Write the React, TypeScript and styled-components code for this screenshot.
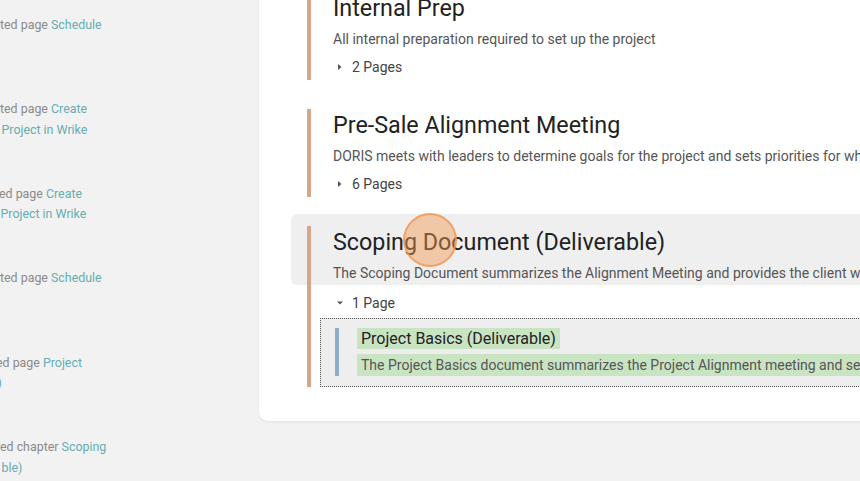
import styled, { createGlobalStyle } from 'styled-components';

const GlobalStyle = createGlobalStyle`
  html, body {
    margin: 0;
    padding: 0;
    background: #f2f2f2;
    font-family: Roboto, 'Noto Sans', sans-serif;
    overflow: hidden;
  }
`;

type Activity = {
  lead: string;
  link: string;
  more?: string;
  shift?: number;
};

const activities: Activity[] = [
  { lead: 'ted page ', link: 'Schedule' },
  { lead: 'ted page ', link: 'Create', more: 'Project in Wrike' },
  { lead: 'ed page ', link: 'Create', more: 'Project in Wrike', shift: -1 },
  { lead: 'ted page ', link: 'Schedule' },
  { lead: 'ed page ', link: 'Project', more: ')', shift: -4 },
  { lead: 'ed chapter ', link: 'Scoping', more: 'ble)' },
];

function Arrow({ open }: { open?: boolean }) {
  return (
    <ArrowIcon width="8" height="8" viewBox="0 0 8 8">
      {open ? <polygon points="1,2.5 7,2.5 4,5.5" /> : <polygon points="2,1 5.5,4 2,7" />}
    </ArrowIcon>
  );
}

function App() {
  return (
    <Page>
      <GlobalStyle />
      <Sidebar>
        {activities.map((a, i) => (
          <ActivityItem key={i} $shift={a.shift ?? 0}>
            <span>{a.lead}</span>
            <ActivityLink>{a.link}</ActivityLink>
            {a.more && (
              <ActivityLine>
                <ActivityLink>{a.more}</ActivityLink>
              </ActivityLine>
            )}
          </ActivityItem>
        ))}
      </Sidebar>

      <Card>
        <Section>
          <Header>
            <Title>Internal Prep</Title>
            <Description>All internal preparation required to set up the project</Description>
          </Header>
          <Toggle>
            <Arrow />
            <span>2 Pages</span>
          </Toggle>
        </Section>

        <Section>
          <Header>
            <Title>Pre-Sale Alignment Meeting</Title>
            <Description>
              DORIS meets with leaders to determine goals for the project and sets priorities for what needs to happen next
            </Description>
          </Header>
          <Toggle>
            <Arrow />
            <span>6 Pages</span>
          </Toggle>
        </Section>

        <Section $expanded>
          <Header $hover>
            <Title>Scoping Document (Deliverable)</Title>
            <Description>
              The Scoping Document summarizes the Alignment Meeting and provides the client with a clear plan
            </Description>
            <ClickMark />
          </Header>
          <Toggle $open>
            <Arrow open />
            <span>1 Page</span>
          </Toggle>
          <PageList>
            <PageItem>
              <PageTitle>Project Basics (Deliverable)</PageTitle>
              <PageDesc>
                The Project Basics document summarizes the Project Alignment meeting and sets the scope for the work
              </PageDesc>
            </PageItem>
          </PageList>
        </Section>
      </Card>
    </Page>
  );
}

const Page = styled.div`
  display: grid;
  grid-template-columns: 259px 820px;
  width: 860px;
  height: 481px;
  overflow: hidden;
`;

const Sidebar = styled.div`
  overflow: hidden;
  padding-top: 14.5px;
`;

const ActivityItem = styled.div<{ $shift: number }>`
  height: 84.5px;
  margin-left: ${(p) => p.$shift}px;
  font-size: 12.4px;
  line-height: 20.5px;
  color: #8a8a8a;
  white-space: nowrap;
`;

const ActivityLine = styled.div`
  padding-left: 1.5px;
`;

const ActivityLink = styled.span`
  color: #66adb3;
`;

const Card = styled.div`
  isolation: isolate;
  display: flex;
  flex-direction: column;
  gap: 29px;
  margin-top: -40px;
  height: 461px;
  box-sizing: border-box;
  padding: 32px 0 33px 48px;
  background: #ffffff;
  border-radius: 0 0 0 9px;
  box-shadow: 0 1px 3px rgba(0, 0, 0, 0.08);
`;

const Section = styled.div<{ $expanded?: boolean }>`
  border-left: 4px solid #d4a78a;
  padding: 2px 0 ${(p) => (p.$expanded ? 0 : 3)}px 22px;
`;

const Header = styled.div<{ $hover?: boolean }>`
  position: relative;
  ${(p) =>
    p.$hover &&
    `
    &::before {
      content: '';
      position: absolute;
      top: -14px;
      bottom: -2px;
      left: -42px;
      right: 0;
      background: #efefef;
      border-radius: 6px;
      z-index: -1;
    }
  `}
`;

const Title = styled.div`
  font-size: 23.3px;
  line-height: 28px;
  color: #222222;
  white-space: nowrap;
`;

const Description = styled.div`
  margin-top: 7px;
  font-size: 14px;
  line-height: 20px;
  color: #555555;
  white-space: nowrap;
`;

const Toggle = styled.div<{ $open?: boolean }>`
  display: flex;
  align-items: center;
  gap: 8px;
  margin-top: ${(p) => (p.$open ? 10 : 8)}px;
  padding-left: 3px;
  height: 20px;
  font-size: 14px;
  color: #444444;
`;

const ArrowIcon = styled.svg`
  fill: #555555;
  flex-shrink: 0;
`;

const ClickMark = styled.div`
  position: absolute;
  left: 70px;
  top: -15px;
  width: 50px;
  height: 50px;
  border-radius: 50%;
  background: rgba(242, 150, 80, 0.45);
  border: 2px solid rgba(240, 150, 85, 0.8);
`;

const PageList = styled.div`
  margin: 5px 0 0 -13px;
  padding: 9px 0 10px 14px;
  border: 1px dotted #555555;
  background: #eeeeee;
`;

const PageItem = styled.div`
  display: flex;
  flex-direction: column;
  align-items: flex-start;
  gap: 5px;
  border-left: 4px solid #8eadc9;
  padding-left: 18px;
`;

const PageTitle = styled.div`
  padding: 0 4px;
  font-size: 16px;
  line-height: 21px;
  color: #222222;
  background: #c9e4c2;
  white-space: nowrap;
`;

const PageDesc = styled.div`
  padding: 0 4px;
  font-size: 14px;
  line-height: 22px;
  color: #555555;
  background: #c9e4c2;
  white-space: nowrap;
`;

export default App;
